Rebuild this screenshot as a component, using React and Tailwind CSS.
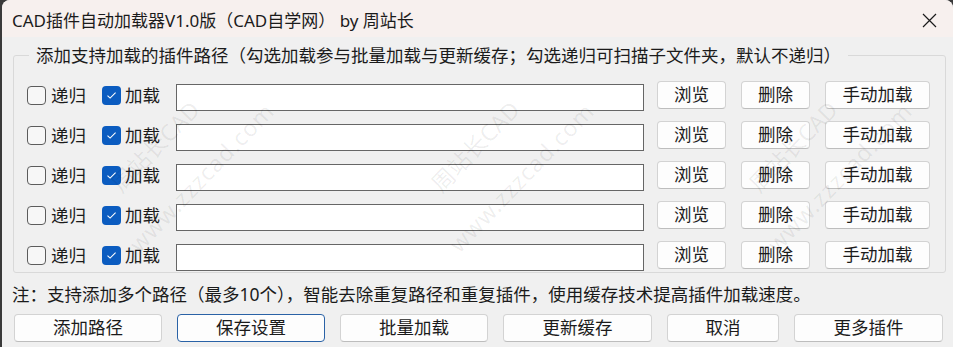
import React from "react";

const rows = [0, 1, 2, 3, 4];

function Check({ checked }) {
  if (checked) {
    return (
      <span className="flex h-[19px] w-[19px] items-center justify-center rounded-[4px] bg-[#0b5cc0]">
        <svg width="11" height="9" viewBox="0 0 11 9" fill="none">
          <path d="M1.5 4.6 L4.1 7.1 L9.6 1.6" stroke="white" strokeWidth="1.1" />
        </svg>
      </span>
    );
  }
  return <span className="h-[19px] w-[19px] rounded-[4px] border border-[#5c5c5c] bg-[#f7f7f7]" />;
}

function Btn({ w, focus, children }) {
  return (
    <button
      className={
        "flex h-[28px] items-center justify-center rounded-[4px] border bg-[#fdfdfd] text-[17.5px] leading-none text-[#1b1b1b] " +
        w +
        (focus ? " border-[#2a62a6]" : " border-[#d3d3d3] border-b-[#bdbdbd]")
      }
    >
      {children}
    </button>
  );
}

function Watermark({ x }) {
  return (
    <>
      <div
        aria-hidden="true"
        className="pointer-events-none absolute origin-top-left -rotate-[46deg] select-none whitespace-nowrap text-[23px] leading-none text-black/[0.07]"
        style={{ left: x, top: 180 }}
      >
        周站长CAD
      </div>
      <div
        aria-hidden="true"
        className="pointer-events-none absolute origin-top-left -rotate-[46deg] select-none whitespace-nowrap text-[23px] leading-none tracking-[1px] text-black/[0.07]"
        style={{ left: x + 18, top: 240 }}
      >
        www.zzzcad.com
      </div>
    </>
  );
}

export default function App() {
  return (
    <div
      className="h-[347px] w-[953px] overflow-hidden bg-[#3a3a3a] pl-[2px]"
      style={{ fontFamily: '"Noto Sans", "Noto Sans CJK SC", sans-serif' }}
    >
      <div className="relative h-[347px] w-[951px] overflow-hidden rounded-t-[8px] bg-[#f0f0f0] text-[#1b1b1b]">
        <div className="flex h-[37px] items-center justify-between bg-[#f7f0ee] pl-[10px] pr-[16px]">
          <span className="pt-[3px] text-[17px] leading-none">CAD插件自动加载器V1.0版（CAD自学网） by 周站长</span>
          <svg width="15" height="15" viewBox="0 0 15 15" className="mt-[4px]">
            <path d="M1 1 L14 14 M14 1 L1 14" stroke="#1b1b1b" strokeWidth="1.2" />
          </svg>
        </div>

        <fieldset className="mx-[11px] mt-[7px] w-[933px] rounded-[3px] border border-[#d9d9d9] pb-[4px] pl-[13px] pt-[15px]">
          <legend className="ml-[2px] px-[7px] text-[17.5px] leading-[22px]">
            添加支持加载的插件路径（勾选加载参与批量加载与更新缓存；勾选递归可扫描子文件夹，默认不递归）
          </legend>
          <div className="flex flex-col gap-[13px]">
            {rows.map((r) => (
              <div key={r} className="flex h-[27px] items-start">
                <div className="mt-[5px] flex items-center">
                  <Check checked={false} />
                  <span className="ml-[5px] text-[17.5px] leading-none">递归</span>
                  <span className="ml-[16px]">
                    <Check checked />
                  </span>
                  <span className="ml-[4px] text-[17.5px] leading-none">加载</span>
                </div>
                <div className="ml-[16px] mt-[3px] h-[27px] w-[468px] border border-[#666] bg-white" />
                <div className="ml-[13px] flex gap-[15px]">
                  <Btn w="w-[69px] h-[27px]">浏览</Btn>
                  <Btn w="w-[69px] h-[27px]">删除</Btn>
                  <Btn w="w-[105px] h-[27px]">手动加载</Btn>
                </div>
              </div>
            ))}
          </div>
        </fieldset>

        <div className="ml-[10px] mt-[10px] text-[17.5px] leading-[22px]">
          注：支持添加多个路径（最多10个），智能去除重复路径和重复插件，使用缓存技术提高插件加载速度。
        </div>

        <div className="ml-[12px] mt-[9px] flex gap-[15px]">
          <Btn w="w-[148px]">添加路径</Btn>
          <Btn w="w-[148px]" focus>
            保存设置
          </Btn>
          <Btn w="w-[148px]">批量加载</Btn>
          <Btn w="w-[149px]">更新缓存</Btn>
          <Btn w="w-[112px]">取消</Btn>
          <Btn w="w-[149px]">更多插件</Btn>
        </div>

        <Watermark x={105} />
        <Watermark x={425} />
        <Watermark x={743} />
      </div>
    </div>
  );
}
